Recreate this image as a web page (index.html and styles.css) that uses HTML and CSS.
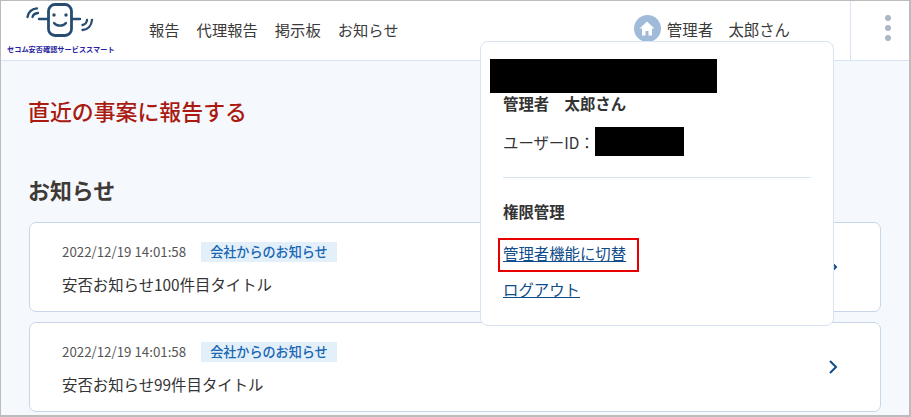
FILE: index.html
```html
<!DOCTYPE html>
<html lang="ja">
<head>
<meta charset="utf-8">
<title>セコム安否確認サービススマート</title>
<link rel="stylesheet" href="styles.css">
</head>
<body>
<div class="frame">
  <header class="header">
    <a class="logo">
      <svg class="logo-mark" width="68" height="40" viewBox="0 0 68 40" fill="none" stroke="#264d70" stroke-linecap="round">
        <rect x="22.500" y="2.500" width="23" height="31" rx="6.500" stroke-width="2.800"/>
        <path d="M13 17H22M46 17H54" stroke-width="2.400"/>
        <path d="M1.500 15C2.200 10 5.500 7 11 6.300M6.500 15C7 12.800 8.500 11.500 12 11" stroke-width="2.300"/>
        <path d="M66 18C65.500 23.500 62 27.500 56.500 28M61 18C60.700 21 59.500 22.500 56.500 23" stroke-width="2.300"/>
        <circle cx="28" cy="13" r="1.700" fill="#264d70" stroke="none"/>
        <circle cx="40" cy="13" r="1.700" fill="#264d70" stroke="none"/>
        <path d="M28 21C30.500 24.500 37.500 24.500 40 21" stroke-width="2.200"/>
      </svg>
      <span class="logo-text">セコム安否確認サービススマート</span>
    </a>
    <nav class="nav">
      <a>報告</a>
      <a>代理報告</a>
      <a>掲示板</a>
      <a>お知らせ</a>
    </nav>
    <div class="user">
      <span class="avatar">
        <svg width="16" height="15" viewBox="0 0 16 15"><path d="M8 0.500 0.500 7.500H3V14.500H6.500V10H9.500V14.500H13V7.500H15.500Z" fill="#fff"/></svg>
      </span>
      <span class="user-name">管理者　太郎さん</span>
    </div>
    <button class="menu" type="button" aria-label="メニュー">
      <i></i><i></i><i></i>
    </button>
  </header>

  <main class="main">
    <h1 class="report-title">直近の事案に報告する</h1>
    <h2 class="section-title">お知らせ</h2>
    <ul class="cards">
      <li class="card">
        <div class="card-body">
          <div class="meta"><time>2022/12/19 14:01:58</time><span class="tag">会社からのお知らせ</span></div>
          <p class="card-title">安否お知らせ100件目タイトル</p>
        </div>
        <svg class="chevron" width="10" height="16" viewBox="0 0 10 16" fill="none"><path d="M2 2 8 8 2 14" stroke="#0f4c8a" stroke-width="2"/></svg>
      </li>
      <li class="card">
        <div class="card-body">
          <div class="meta"><time>2022/12/19 14:01:58</time><span class="tag">会社からのお知らせ</span></div>
          <p class="card-title">安否お知らせ99件目タイトル</p>
        </div>
        <svg class="chevron" width="10" height="16" viewBox="0 0 10 16" fill="none"><path d="M2 2 8 8 2 14" stroke="#0f4c8a" stroke-width="2"/></svg>
      </li>
    </ul>
  </main>

  <aside class="popup">
    <div class="redact redact-company"></div>
    <p class="popup-name">管理者　太郎さん</p>
    <p class="popup-id">ユーザーID：<span class="redact redact-id"></span></p>
    <hr class="popup-rule">
    <p class="popup-head">権限管理</p>
    <a class="popup-link popup-link-marked">管理者機能に切替</a>
    <a class="popup-link">ログアウト</a>
  </aside>
</div>
</body>
</html>
```
FILE: styles.css
```css
* { box-sizing: border-box; }
html, body { margin: 0; height: 100%; }
body {
  background: #bcbcbc;
  font-family: "Noto Sans CJK JP", "Noto Sans", sans-serif;
  color: #333;
  overflow: hidden;
}
.frame {
  position: relative;
  width: 908px;
  height: 414px;
  margin: 1px 0 0 1px;
  background: #f5f9fe;
  overflow: hidden;
}
.header {
  display: flex;
  align-items: center;
  height: 60px;
  background: #fff;
  border-bottom: 1px solid #d8e4f2;
}
.logo {
  display: flex;
  flex-direction: column;
  align-items: flex-start;
  align-self: flex-start;
  width: 148px;
  flex: none;
  padding: 1px 0 0 6px;
}
.logo-mark { display: block; margin-left: 19px; }
.logo-text {
  font-size: 7.200px;
  line-height: 10px;
  margin-top: 2px;
  font-weight: 700;
  color: #2a1fa0;
  white-space: nowrap;
}
.nav {
  display: flex;
  gap: 17px;
  font-size: 15.300px;
  line-height: 20px;
  margin-top: -4px;
  color: #3a3a3a;
}
.user {
  display: flex;
  align-items: center;
  gap: 6px;
  margin-left: auto;
  margin-right: 60px;
  margin-top: -4px;
}
.avatar {
  display: flex;
  align-items: center;
  justify-content: center;
  width: 27px;
  height: 27px;
  border-radius: 50%;
  background: #a0bbda;
}
.user-name { font-size: 15.400px; line-height: 20px; color: #3a3a3a; }
.menu {
  display: flex;
  flex-direction: column;
  align-items: center;
  justify-content: center;
  gap: 4px;
  width: 59px;
  height: 59px;
  padding: 0 0 5px 15px;
  background: #fff;
  border: 0;
  border-left: 1px solid #d8e4f2;
}
.menu i {
  display: block;
  width: 6px;
  height: 6px;
  border-radius: 50%;
  background: #adb7c5;
}
.main { padding: 35px 28px 0; }
.report-title {
  margin: 0 0 0 -1px;
  font-size: 21.900px;
  line-height: 30px;
  font-weight: 500;
  color: #aa1a10;
}
.section-title {
  margin: 49px 0 0 -1px;
  font-size: 21.900px;
  line-height: 30px;
  font-weight: 700;
  color: #3f3a36;
}
.cards {
  list-style: none;
  margin: 17px 0 0;
  padding: 0;
  display: flex;
  flex-direction: column;
  gap: 10px;
}
.card {
  display: flex;
  align-items: center;
  height: 90px;
  padding: 0 42px 0 32px;
  background: #fff;
  border: 1px solid #c8d6ea;
  border-radius: 7px;
}
.card-body { flex: 1; padding-top: 1px; }
.meta { display: flex; align-items: center; gap: 15px; }
.meta time { font-size: 13.300px; color: #555; }
.tag {
  font-size: 13.100px;
  line-height: 20px;
  font-weight: 500;
  padding: 0 9px;
  color: #1866b4;
  background: #e3f0fa;
}
.card-title { margin: 12px 0 0; font-size: 15.400px; line-height: 20px; color: #333; }
.chevron { flex: none; }
.popup {
  position: absolute;
  left: 479px;
  top: 40px;
  width: 354px;
  height: 285px;
  padding: 49px 22px 0;
  background: #fff;
  border: 1px solid #d8e4f2;
  border-radius: 8px;
}
.redact { background: #000; }
.redact-company {
  position: absolute;
  left: 9px;
  top: 17px;
  width: 227px;
  height: 34px;
}
.popup-name { margin: 0; font-size: 15.400px; line-height: 24px; font-weight: 700; color: #333; }
.popup-id { display: flex; align-items: center; margin: 12px 0 0; height: 29px; font-size: 15.400px; color: #333; }
.redact-id { display: block; width: 89px; height: 29px; }
.popup-rule { margin: 21px 0 0; border: 0; border-top: 1px solid #d8e4f2; }
.popup-head { margin: 21px 0 0; font-size: 15.400px; line-height: 24px; font-weight: 700; color: #333; }
.popup-link {
  display: table;
  font-size: 15.400px;
  line-height: 22px;
  color: #0f4c8a;
  text-decoration: underline;
}
.popup-link-marked {
  margin: 15px 0 0 -5px;
  padding: 2px 11px 6px 3px;
  border: 2px solid #e60000;
}
.popup-link-marked + .popup-link { margin-top: 6px; }
```
